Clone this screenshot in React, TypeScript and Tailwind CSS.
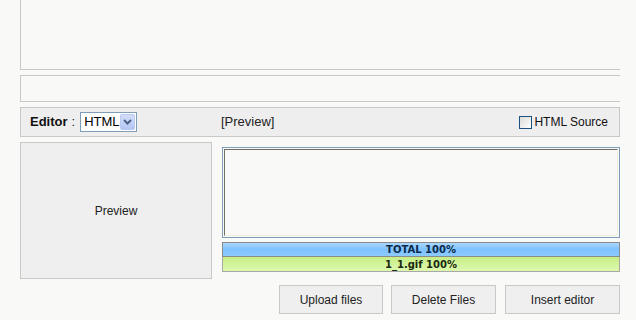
import React from "react";

export default function App() {
  const font = { fontFamily: '"Liberation Sans", Arial, sans-serif' };
  return (
    <div className="w-[636px] h-[320px] bg-[#f9f9f7] overflow-hidden text-[12px] text-[#222]" style={font}>
      <div className="ml-[20px] w-[600px]">
        <div className="h-[70px] border-l border-b border-[#c8c8c8]" />
        <div className="mt-[5px] h-[27px] border-l border-t border-b border-[#c8c8c8]" />
        <div className="mt-[5px] h-[30px] border border-[#c8c8c8] bg-[#eeeeee] flex items-center">
          <div className="w-[200px] pl-[9px] flex items-center">
            <span className="font-bold text-[13px] text-[#111]">Editor</span>
            <span className="ml-[4px] text-[13px]">:</span>
            <div className="ml-[5px] w-[57px] h-[20px] border border-[#7f9db9] bg-white flex items-center justify-between pl-[3px] pr-[1px]">
              <span className="text-[13px] text-black">HTML</span>
              <div className="w-[15px] h-[16px] rounded-[2px] bg-gradient-to-b from-[#d2ddfb] to-[#b3c7f4] border border-[#b8c9f2] flex items-center justify-center">
                <svg width="9" height="6" viewBox="0 0 9 6">
                  <path d="M1 1 L4.5 4.5 L8 1" stroke="#4d6185" strokeWidth="2" fill="none" />
                </svg>
              </div>
            </div>
          </div>
          <span className="text-[13px] text-[#222]">[Preview]</span>
          <label className="ml-auto mr-[11px] flex items-center">
            <span className="w-[13px] h-[13px] border border-[#1c5180] bg-gradient-to-br from-[#dcdcd7] to-[#ffffff]" />
            <span className="ml-[2px] text-[12px] text-[#111]">HTML Source</span>
          </label>
        </div>
        <div className="mt-[5px] flex items-start">
          <div className="w-[192px] h-[137px] border border-[#c8c8c8] bg-[#efefef] flex items-center justify-center">
            <span className="text-[12px] text-[#222]">Preview</span>
          </div>
          <div className="ml-[10px] w-[398px] pt-[5px]">
            <div className="h-[91px] border border-[#7f9db9] p-[1px]">
              <div className="h-full border-t border-l border-[#716f64] border-r border-b border-r-[#f1efe2] border-b-[#f1efe2] bg-[#f9f9f7]" />
            </div>
            <div className="mt-[4px] h-[15px] border border-[#8a8a8a] bg-gradient-to-b from-[#a9d6ff] via-[#7ec2ff] to-[#8ccaff] flex items-center justify-center">
              <span className="font-bold text-[10px] text-[#0b2a4a]" style={{ fontFamily: '"DejaVu Sans", Verdana, sans-serif' }}>TOTAL 100%</span>
            </div>
            <div className="h-[15px] border border-t-0 border-[#a8a8a8] bg-gradient-to-b from-[#c6ee86] to-[#ddf8ae] flex items-center justify-center">
              <span className="font-bold text-[10px] text-[#1a2a10]" style={{ fontFamily: '"DejaVu Sans", Verdana, sans-serif' }}>1_1.gif 100%</span>
            </div>
          </div>
        </div>
        <div className="mt-[6px] flex justify-end">
          <button className="w-[104px] h-[29px] border border-[#c8c8c8] bg-[#efefef] text-[12px] text-[#222]">Upload files</button>
          <button className="ml-[8px] w-[105px] h-[29px] border border-[#c8c8c8] bg-[#efefef] text-[12px] text-[#222]">Delete Files</button>
          <button className="ml-[9px] w-[115px] h-[29px] border border-[#c8c8c8] bg-[#efefef] text-[12px] text-[#222]">Insert editor</button>
        </div>
      </div>
    </div>
  );
}
